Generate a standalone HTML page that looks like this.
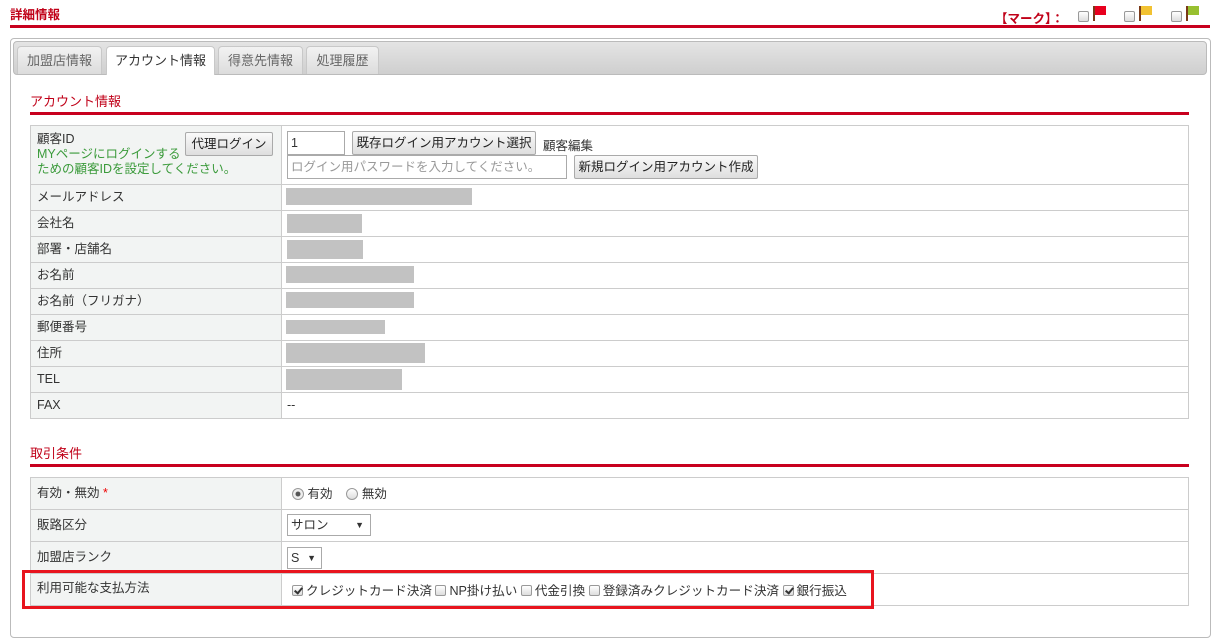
<!DOCTYPE html>
<html><head><meta charset="utf-8"><style>
*{box-sizing:border-box;margin:0;padding:0}
body{width:1221px;height:625px;overflow:hidden;background:#fff;font-family:"Liberation Sans","Noto Sans CJK JP",sans-serif;font-size:12.5px;color:#333;position:relative}
.a{position:absolute}
.red{color:#c00018}
.line{position:absolute;height:3px;background:#c8001e}
.tab{position:absolute;top:46px;height:28px;border:1px solid #c8c8c8;border-bottom:none;border-radius:4px 4px 0 0;background:linear-gradient(#f2f2f2,#dcdcdc);color:#666;font-size:13px;line-height:27px;text-align:center}
.tab.on{background:#fff;color:#333;height:29px}
.lab{position:absolute;left:30px;width:252px;background:#f2f4f3;border:1px solid #ccc;padding-left:6px;line-height:24px}
.val{position:absolute;left:281px;width:908px;border:1px solid #ccc}
.bar{position:absolute;background:#c2c2c2}
.btn{position:absolute;height:24px;border:1px solid #aaa;border-radius:2px;background:linear-gradient(#fafafa,#dedede);line-height:22px;text-align:center;font-size:12.5px;color:#222;white-space:nowrap}
.inp{position:absolute;border:1px solid #aaa;background:#fff;height:24px;line-height:22px;padding-left:3px}
.cb{display:inline-block;width:11px;height:11px;border:1px solid #999;border-radius:2px;background:linear-gradient(#fff,#ddd);vertical-align:-1px;margin-right:3px;position:relative}
.cb.k:after{content:"";position:absolute;left:3px;top:0;width:3px;height:6px;border:solid #333;border-width:0 2px 2px 0;transform:rotate(40deg)}
</style></head><body>
<div class="a red" style="left:10px;top:4px;font-weight:bold;font-size:12.5px">詳細情報</div>
<div class="line" style="left:10px;top:25px;width:1200px"></div>
<div class="a red" style="left:995px;top:8px;font-weight:bold;font-size:12.5px">【マーク】：</div>
<div class="a" style="left:1078px;top:10px"><span class="cb"></span></div>
<svg class="a" style="left:1092px;top:5px" width="16" height="16"><rect x="1" y="1" width="2" height="15" fill="#7a3a1a"/><rect x="3" y="1" width="11" height="9" fill="#e8001e"/></svg>
<div class="a" style="left:1124px;top:10px"><span class="cb"></span></div>
<svg class="a" style="left:1138px;top:5px" width="16" height="16"><rect x="1" y="1" width="2" height="15" fill="#7a3a1a"/><rect x="3" y="1" width="11" height="9" fill="#f2c232"/></svg>
<div class="a" style="left:1171px;top:10px"><span class="cb"></span></div>
<svg class="a" style="left:1185px;top:5px" width="16" height="16"><rect x="1" y="1" width="2" height="15" fill="#7a3a1a"/><rect x="3" y="1" width="11" height="9" fill="#98c030"/></svg>

<div class="a" style="left:10px;top:38px;width:1201px;height:600px;border:1px solid #bbb;border-radius:4px"></div>
<div class="a" style="left:13px;top:41px;width:1194px;height:34px;border:1px solid #bbb;border-radius:4px;background:linear-gradient(#e4e4e4,#cfcfcf)"></div>
<div class="tab" style="left:17px;width:85px">加盟店情報</div>
<div class="tab on" style="left:106px;width:109px">アカウント情報</div>
<div class="tab" style="left:218px;width:85px">得意先情報</div>
<div class="tab" style="left:306px;width:73px">処理履歴</div>

<div class="a red" style="left:30px;top:91px;font-size:13px">アカウント情報</div>
<div class="line" style="left:30px;top:112px;width:1159px"></div>

<div class="lab" style="top:125px;height:60px;line-height:15px;padding-top:6px">顧客ID<br><span style="color:#3a9a3a">MYページにログインする<br>ための顧客IDを設定してください。</span></div>
<div class="val" style="top:125px;height:60px"></div>
<div class="btn" style="left:185px;top:132px;width:88px">代理ログイン</div>
<div class="inp" style="left:287px;top:131px;width:58px">1</div>
<div class="btn" style="left:352px;top:131px;width:184px">既存ログイン用アカウント選択</div>
<div class="a" style="left:543px;top:135px">顧客編集</div>
<div class="inp" style="left:287px;top:155px;width:280px;color:#999">ログイン用パスワードを入力してください。</div>
<div class="btn" style="left:574px;top:155px;width:184px">新規ログイン用アカウント作成</div>

<div class="lab" style="top:184px;height:27px">メールアドレス</div><div class="val" style="top:184px;height:27px"></div><div class="bar" style="left:286px;top:188px;width:186px;height:17px"></div>
<div class="lab" style="top:210px;height:27px">会社名</div><div class="val" style="top:210px;height:27px"></div><div class="bar" style="left:287px;top:214px;width:75px;height:19px"></div>
<div class="lab" style="top:236px;height:27px">部署・店舗名</div><div class="val" style="top:236px;height:27px"></div><div class="bar" style="left:287px;top:240px;width:76px;height:19px"></div>
<div class="lab" style="top:262px;height:27px">お名前</div><div class="val" style="top:262px;height:27px"></div><div class="bar" style="left:286px;top:266px;width:128px;height:17px"></div>
<div class="lab" style="top:288px;height:27px">お名前（フリガナ）</div><div class="val" style="top:288px;height:27px"></div><div class="bar" style="left:286px;top:292px;width:128px;height:16px"></div>
<div class="lab" style="top:314px;height:27px">郵便番号</div><div class="val" style="top:314px;height:27px"></div><div class="bar" style="left:286px;top:320px;width:99px;height:14px"></div>
<div class="lab" style="top:340px;height:27px">住所</div><div class="val" style="top:340px;height:27px"></div><div class="bar" style="left:286px;top:343px;width:139px;height:20px"></div>
<div class="lab" style="top:366px;height:27px">TEL</div><div class="val" style="top:366px;height:27px"></div><div class="bar" style="left:286px;top:369px;width:116px;height:21px"></div>
<div class="lab" style="top:392px;height:27px">FAX</div><div class="val" style="top:392px;height:27px;padding-left:5px;line-height:24px">--</div>

<div class="a red" style="left:30px;top:443px;font-size:13px">取引条件</div>
<div class="line" style="left:30px;top:464px;width:1159px"></div>

<div class="lab" style="top:477px;height:33px;line-height:30px">有効・無効 <span style="color:#e00">*</span></div>
<div class="val" style="top:477px;height:33px"></div>
<div class="a" style="left:292px;top:487px;line-height:14px"><span style="display:inline-block;width:12px;height:12px;border:1px solid #999;border-radius:50%;background:radial-gradient(#555 30%,#eee 40%);vertical-align:-2px"></span> 有効 &nbsp;&nbsp; <span style="display:inline-block;width:12px;height:12px;border:1px solid #999;border-radius:50%;background:linear-gradient(#fff,#ddd);vertical-align:-2px"></span> 無効</div>
<div class="lab" style="top:509px;height:33px;line-height:30px">販路区分</div>
<div class="val" style="top:509px;height:33px"></div>
<div class="inp" style="left:287px;top:514px;width:84px;height:22px;line-height:20px">サロン <span style="position:absolute;right:6px;font-size:9px">▼</span></div>
<div class="lab" style="top:541px;height:33px;line-height:30px">加盟店ランク</div>
<div class="val" style="top:541px;height:33px"></div>
<div class="inp" style="left:287px;top:547px;width:35px;height:22px;line-height:20px">S <span style="position:absolute;right:5px;font-size:9px">▼</span></div>
<div class="lab" style="top:573px;height:33px;line-height:28px">利用可能な支払方法</div>
<div class="val" style="top:573px;height:33px"></div>
<div class="a" style="left:292px;top:584px;line-height:14px;font-size:12.6px;white-space:nowrap"><span class="cb k"></span>クレジットカード決済 <span class="cb"></span>NP掛け払い <span class="cb"></span>代金引換 <span class="cb"></span>登録済みクレジットカード決済 <span class="cb k"></span>銀行振込</div>
<div class="a" style="left:22px;top:570px;width:852px;height:39px;border:3px solid #e8141e"></div>
</body></html>
